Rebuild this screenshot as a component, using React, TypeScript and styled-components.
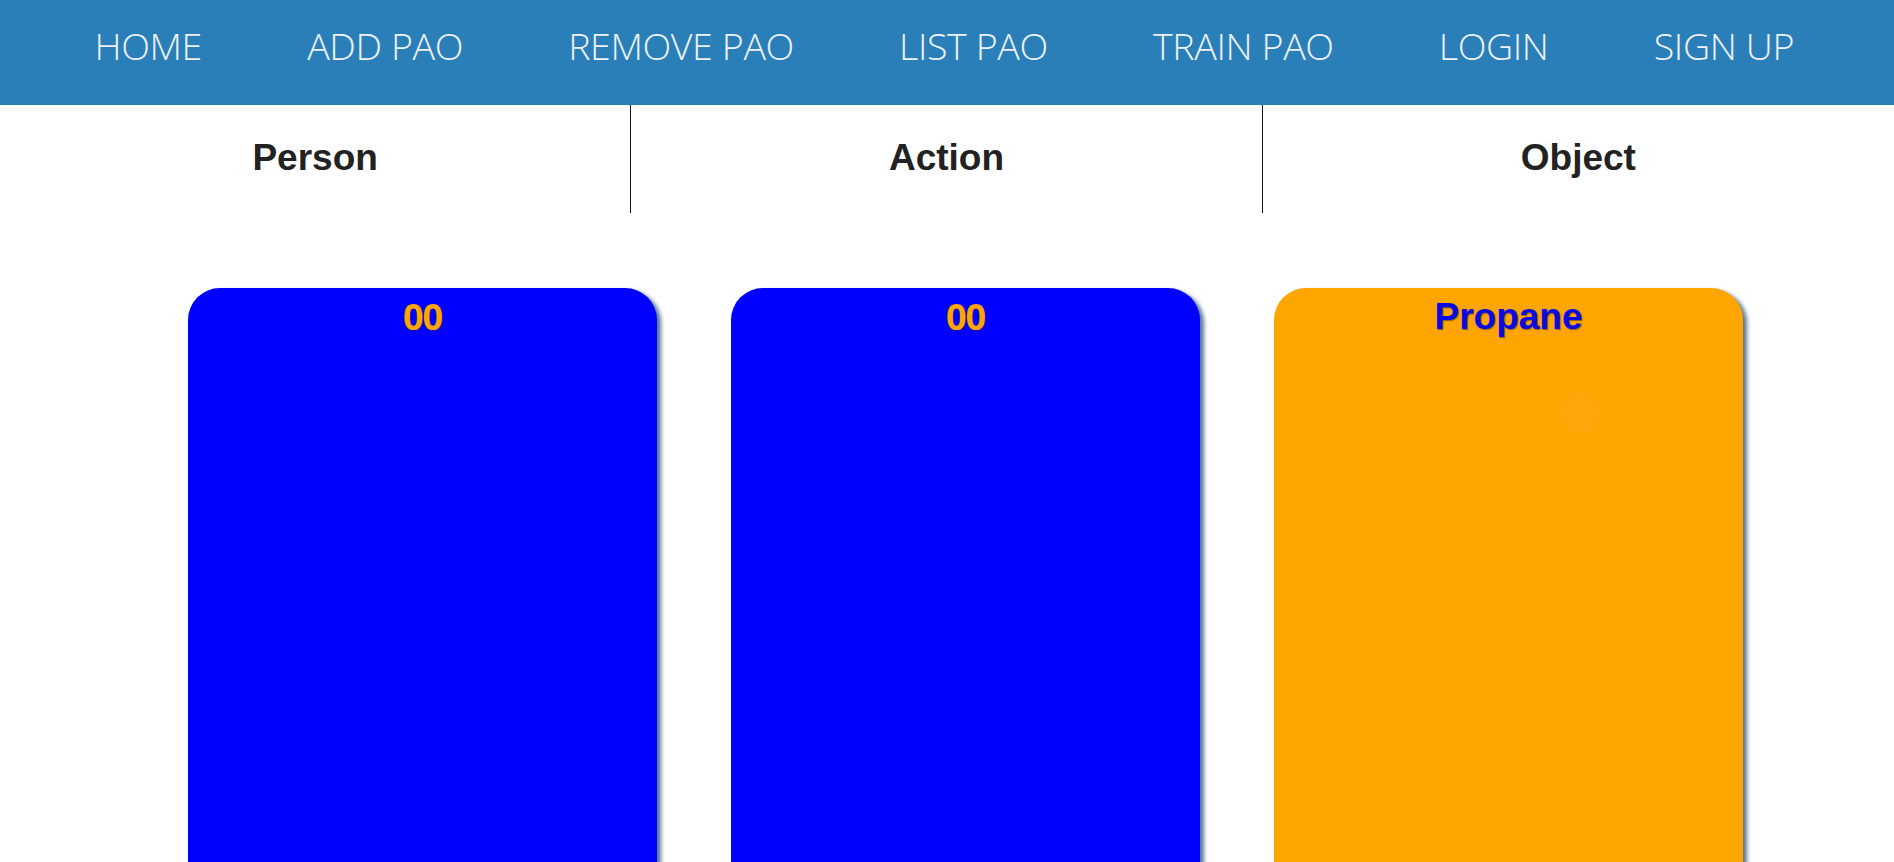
import React from "react";
import styled, { createGlobalStyle } from "styled-components";

const Global = createGlobalStyle`
  html, body { margin: 0; padding: 0; background: #ffffff; overflow: hidden; }
  body { font-family: "Open Sans", "Liberation Sans", sans-serif; }
  * { box-sizing: border-box; }
`;

const NavBar = styled.nav`
  height: 105px;
  background: #2a7fb9;
  display: flex;
  align-items: center;
  padding: 0 0 14px 42px;
  margin: 0;
`;

const NavItem = styled.a`
  display: block;
  padding: 0 52.6px;
  color: #eef2f5;
  font-family: "Open Sans", "Liberation Sans", sans-serif;
  font-weight: 300;
  font-size: 37.6px;
  letter-spacing: -0.4px;
  text-decoration: none;
  white-space: nowrap;
`;

const HeaderRow = styled.div`
  display: grid;
  grid-template-columns: repeat(3, 1fr);
  height: 108px;
`;

const HeaderCell = styled.div<{ $divider?: boolean }>`
  display: flex;
  align-items: center;
  justify-content: center;
  border-right: ${(p) => (p.$divider ? "1px solid #111" : "none")};
  font-family: "Liberation Sans", Arial, sans-serif;
  font-weight: 700;
  font-size: 37px;
  color: #222222;
  padding-bottom: 3px;
`;

const CardRow = styled.div`
  display: flex;
  gap: 74px;
  padding: 75px 0 0 188px;
`;

const Card = styled.div<{ $bg: string }>`
  position: relative;
  width: 469px;
  height: 640px;
  border-radius: 32px;
  background: ${(p) => p.$bg};
  box-shadow: 4px 3px 4px rgba(30, 70, 110, 0.75);
  display: flex;
  flex-direction: column;
  align-items: center;
`;

const CardTitle = styled.div<{ $color: string; $font: "segoe" | "arial" }>`
  color: ${(p) => p.$color};
  font-family: ${(p) =>
    p.$font === "arial"
      ? `"Liberation Sans", Arial, sans-serif`
      : `"Open Sans", "Liberation Sans", sans-serif`};
  font-weight: 700;
  font-size: ${(p) => (p.$font === "arial" ? "37px" : "36px")};
  letter-spacing: ${(p) => (p.$font === "arial" ? "0" : "-1px")};
  line-height: 1;
  margin-top: ${(p) => (p.$font === "arial" ? "10px" : "11px")};
  text-shadow: 1px 1px 1px rgba(40, 30, 60, 0.55);
`;

const Ghost = styled.div`
  position: absolute;
  left: 285px;
  top: 104px;
  width: 42px;
  height: 42px;
  border-radius: 50%;
  background: #ffa60a;
`;

const navItems = ["HOME", "ADD PAO", "REMOVE PAO", "LIST PAO", "TRAIN PAO", "LOGIN", "SIGN UP"];

export default function App() {
  return (
    <>
      <Global />
      <NavBar>
        {navItems.map((n) => (
          <NavItem key={n} href="#">
            {n}
          </NavItem>
        ))}
      </NavBar>
      <HeaderRow>
        <HeaderCell $divider>Person</HeaderCell>
        <HeaderCell $divider>Action</HeaderCell>
        <HeaderCell>Object</HeaderCell>
      </HeaderRow>
      <CardRow>
        <Card $bg="#0000ff">
          <CardTitle $color="#ffa500" $font="segoe">00</CardTitle>
        </Card>
        <Card $bg="#0000ff">
          <CardTitle $color="#ffa500" $font="segoe">00</CardTitle>
        </Card>
        <Card $bg="#ffa500">
          <CardTitle $color="#0a0ae0" $font="arial">Propane</CardTitle>
          <Ghost />
        </Card>
      </CardRow>
    </>
  );
}
